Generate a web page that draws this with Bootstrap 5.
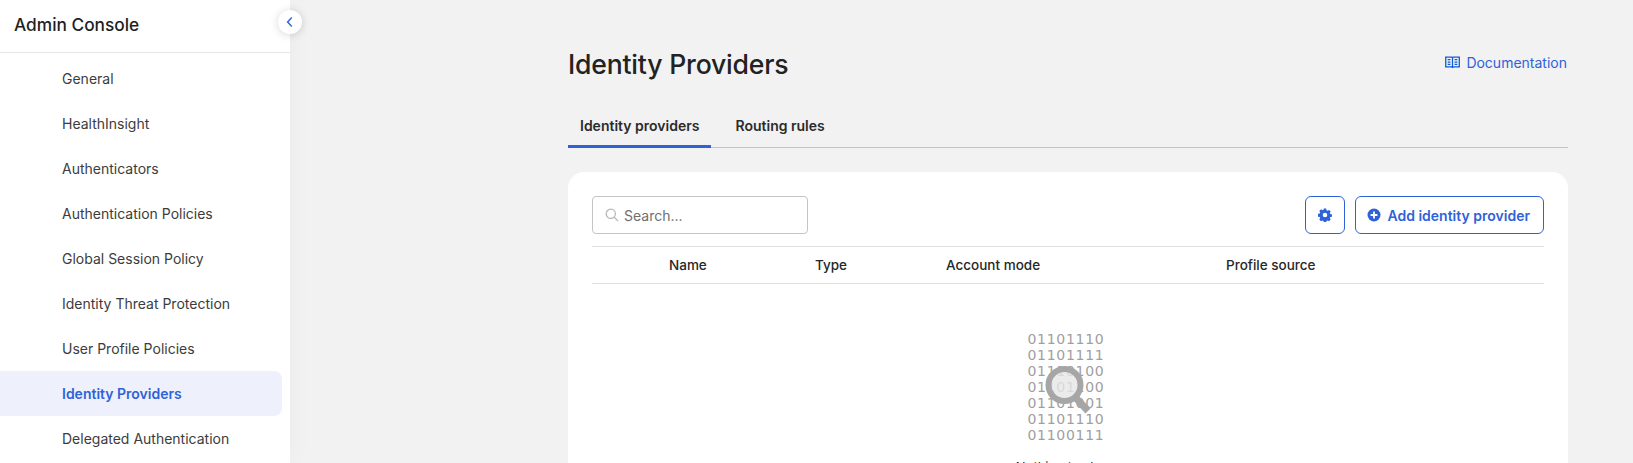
<!DOCTYPE html>
<html lang="en">
<head>
    <meta charset="UTF-8">
    <meta name="viewport" content="width=device-width, initial-scale=1.0">
    <title>Identity Providers</title>
    <link href="https://cdn.jsdelivr.net/npm/bootstrap@5.3.0/dist/css/bootstrap.min.css" rel="stylesheet">
    <script src="https://cdn.jsdelivr.net/npm/bootstrap@5.3.0/dist/js/bootstrap.bundle.min.js"></script>
    <style>
        html, body { height: 463px; overflow: hidden; }
        body { background: #f2f2f2; font-family: Inter, "Liberation Sans", sans-serif; color: #272727; font-size: 14px; }

        /* sidebar */
        .side-panel { width: 290px; height: 463px; background: #fff; flex: none; position: relative; box-shadow: 0 0 24px rgba(0,0,0,.04); }
        .side-head { height: 53px; border-bottom: 1px solid #e6e6e6; padding: 14px 14px 0; font-size: 17.3px; line-height: 21px; font-weight: 500; color: #1f1f1f; }
        .side-toggle { position: absolute; top: 10px; left: 278px; width: 24px; height: 24px; padding: 0; border: 0; border-radius: 50%; background: #fff; box-shadow: 0 1px 8px rgba(0,0,0,.16); display: flex; align-items: center; justify-content: center; z-index: 2; }
        .side-list { padding: 4px 8px 0 0; }
        .side-list .list-group-item { border: 0; height: 45px; padding: 0 0 2px 62px; display: flex; align-items: center; font-size: 14px; color: #3c3c3c; background: transparent; border-radius: 0 8px 8px 0; margin: 0; }
        .side-list .list-group-item.active { background: #eef1fb; color: #2f62d9; font-weight: 600; padding-bottom: 1px; }
        .side-list .list-group-item.active + .list-group-item { padding-bottom: 1px; }

        /* main column */
        .main-col { width: 1000px; margin-left: 278px; flex: none; }
        .page-top { height: 93px; padding-top: 44px; }
        .page-title { font-size: 26.6px; line-height: 40px; font-weight: 500; margin: 0; color: #222; letter-spacing: -.2px; }
        .doc-link { color: #2f62d9; text-decoration: none; font-size: 14px; margin-top: 8px; padding-right: 1px; }
        .doc-link svg { margin-right: 6px; }
        .main-tabs { border-bottom: 1px solid #c3c3c3; height: 55px; gap: 12px; }
        .main-tabs .nav-link { border: 0; border-bottom: 3px solid transparent; border-radius: 0; background: transparent; color: #2b2b2b; font-weight: 600; font-size: 14px; height: 55px; padding: 22px 12px 0; margin-bottom: -1px; }
        .main-tabs .nav-link.active { border-bottom-color: #2f62d9; background: transparent; color: #2b2b2b; }
        .panel-card { border: 0; border-radius: 16px; margin-top: 24px; padding: 24px; height: 400px; background: #fff; }

        .search-box { width: 216px; height: 38px; position: relative; }
        .search-box .form-control { height: 38px; border: 1px solid #c4c4c4; border-radius: 4px; padding-left: 31px; font-size: 14px; }
        .search-box .form-control::placeholder { color: #6f6f6f; opacity: 1; }
        .search-box svg { position: absolute; left: 13px; top: 12px; }
        .blue-btn { height: 38px; border: 1px solid #2f62d9; border-radius: 6px; background: #fff; color: #2f62d9; font-weight: 600; font-size: 14px; padding: 0 13px 0 11px; display: flex; align-items: center; gap: 6px; }
        .icon-btn { width: 40px; padding: 0; justify-content: center; }
        .btn-row { gap: 10px; }

        .grid-head { margin: 12px 0 0; table-layout: fixed; width: 100%; }
        .grid-head th { padding: 0; height: 37px; border-top: 1px solid #e0e0e0; border-bottom: 1px solid #e0e0e0; font-size: 13.5px; font-weight: 500; vertical-align: middle; color: #272727; background: transparent; }
        .w-check { width: 77px; }
        .w-name { width: 146px; }
        .w-type { width: 131px; }
        .w-mode { width: 280px; }

        .empty-state { padding: 47px 4px 0 0; text-align: center; }
        .binary-wrap { position: relative; width: 75px; margin: 0 auto; }
        .binary-text { font-family: "DejaVu Sans", sans-serif; font-size: 14px; line-height: 16px; letter-spacing: .7px; color: #a0a0a0; margin: 0 0 0 -1px; white-space: pre; overflow: visible; text-align: left; }
        .binary-wrap svg { position: absolute; left: 16px; top: 35px; }
        .empty-msg { margin-top: 15px; font-size: 13px; color: #272727; }
    </style>
</head>
<body>
    <div class="d-flex">
        <!-- sidebar -->
        <div class="side-panel">
            <div class="side-head">Admin Console</div>
            <button class="side-toggle" type="button" aria-label="Collapse">
                <svg width="12" height="12" viewBox="0 0 12 12" fill="none" stroke="#2f62d9" stroke-width="1.4"><path d="M7.8 1.5 3.6 6l4.2 4.5"/></svg>
            </button>
            <div class="list-group side-list">
                <a class="list-group-item" href="#">General</a>
                <a class="list-group-item" href="#">HealthInsight</a>
                <a class="list-group-item" href="#">Authenticators</a>
                <a class="list-group-item" href="#">Authentication Policies</a>
                <a class="list-group-item" href="#">Global Session Policy</a>
                <a class="list-group-item" href="#">Identity Threat Protection</a>
                <a class="list-group-item" href="#">User Profile Policies</a>
                <a class="list-group-item active" href="#">Identity Providers</a>
                <a class="list-group-item" href="#">Delegated Authentication</a>
            </div>
        </div>

        <!-- content -->
        <div class="main-col">
            <div class="page-top d-flex justify-content-between align-items-start">
                <h1 class="page-title">Identity Providers</h1>
                <a class="doc-link d-flex align-items-center" href="#">
                    <svg width="15" height="13" viewBox="0 0 16 14" fill="none" stroke="#0b5cd5" stroke-width="1.4"><path d="M.7 1.2h6.600l.7.6.7-.6h6.600v10.600H8.700l-.7.6-.7-.6H.7zM8 1.800v10.600"/><path d="M2.800 4h3M2.800 6.500h3M2.800 9h3M10.200 4h3M10.200 6.500h3M10.200 9h3"/></svg>
                    Documentation
                </a>
            </div>

            <ul class="nav nav-tabs main-tabs">
                <li class="nav-item"><a class="nav-link active" href="#">Identity providers</a></li>
                <li class="nav-item"><a class="nav-link" href="#">Routing rules</a></li>
            </ul>

            <div class="card panel-card">
                <div class="d-flex justify-content-between">
                    <div class="search-box">
                        <svg width="14" height="14" viewBox="0 0 14 14" fill="none" stroke="#b5b5b5" stroke-width="1.2"><circle cx="5.800" cy="5.800" r="4.600"/><path d="m9.200 9.200 3.800 3.800"/></svg>
                        <input class="form-control" type="text" placeholder="Search...">
                    </div>
                    <div class="d-flex btn-row">
                        <button class="blue-btn icon-btn" type="button" aria-label="Settings">
                            <svg width="14" height="14" viewBox="0 0 14 14"><path fill="#2f62d9" fill-rule="evenodd" d="M5.800.6h2.400l.3 1.700 1 .5 1.500-.9 1.700 1.700-.9 1.500.5 1 1.700.3v2.400l-1.700.3-.5 1 .9 1.500-1.700 1.700-1.500-.9-1 .5-.3 1.700H5.800l-.3-1.700-1-.5-1.500.9-1.700-1.700.9-1.500-.5-1-1.700-.3V5.800l1.700-.3.500-1-.9-1.500L3.100 1.300l1.500.9 1-.5zM7 4.700a2.300 2.300 0 1 0 0 4.600 2.300 2.300 0 0 0 0-4.600z"/></svg>
                        </button>
                        <button class="blue-btn" type="button">
                            <svg width="14" height="14" viewBox="0 0 14 14"><circle cx="7" cy="7" r="6.500" fill="#2f62d9"/><path d="M7 3.600v6.800M3.600 7h6.800" stroke="#fff" stroke-width="1.800"/></svg>
                            Add identity provider
                        </button>
                    </div>
                </div>

                <table class="grid-head">
                    <thead>
                        <tr>
                            <th class="w-check"></th>
                            <th class="w-name">Name</th>
                            <th class="w-type">Type</th>
                            <th class="w-mode">Account mode</th>
                            <th>Profile source</th>
                        </tr>
                    </thead>
                </table>

                <div class="empty-state">
                    <div class="binary-wrap">
<pre class="binary-text">01101110
01101111
01110100
01101100
01101001
01101110
01100111</pre>
                        <svg width="50" height="52" viewBox="0 0 50 52"><path d="m30 31 13 14" stroke="#a6a6a6" stroke-width="7"/><circle cx="19.500" cy="19" r="16" fill="#e6e6e6" fill-opacity=".8" stroke="#a6a6a6" stroke-width="6"/></svg>
                    </div>
                    <div class="empty-msg">Nothing to show</div>
                </div>
            </div>
        </div>
    </div>
</body>
</html>
